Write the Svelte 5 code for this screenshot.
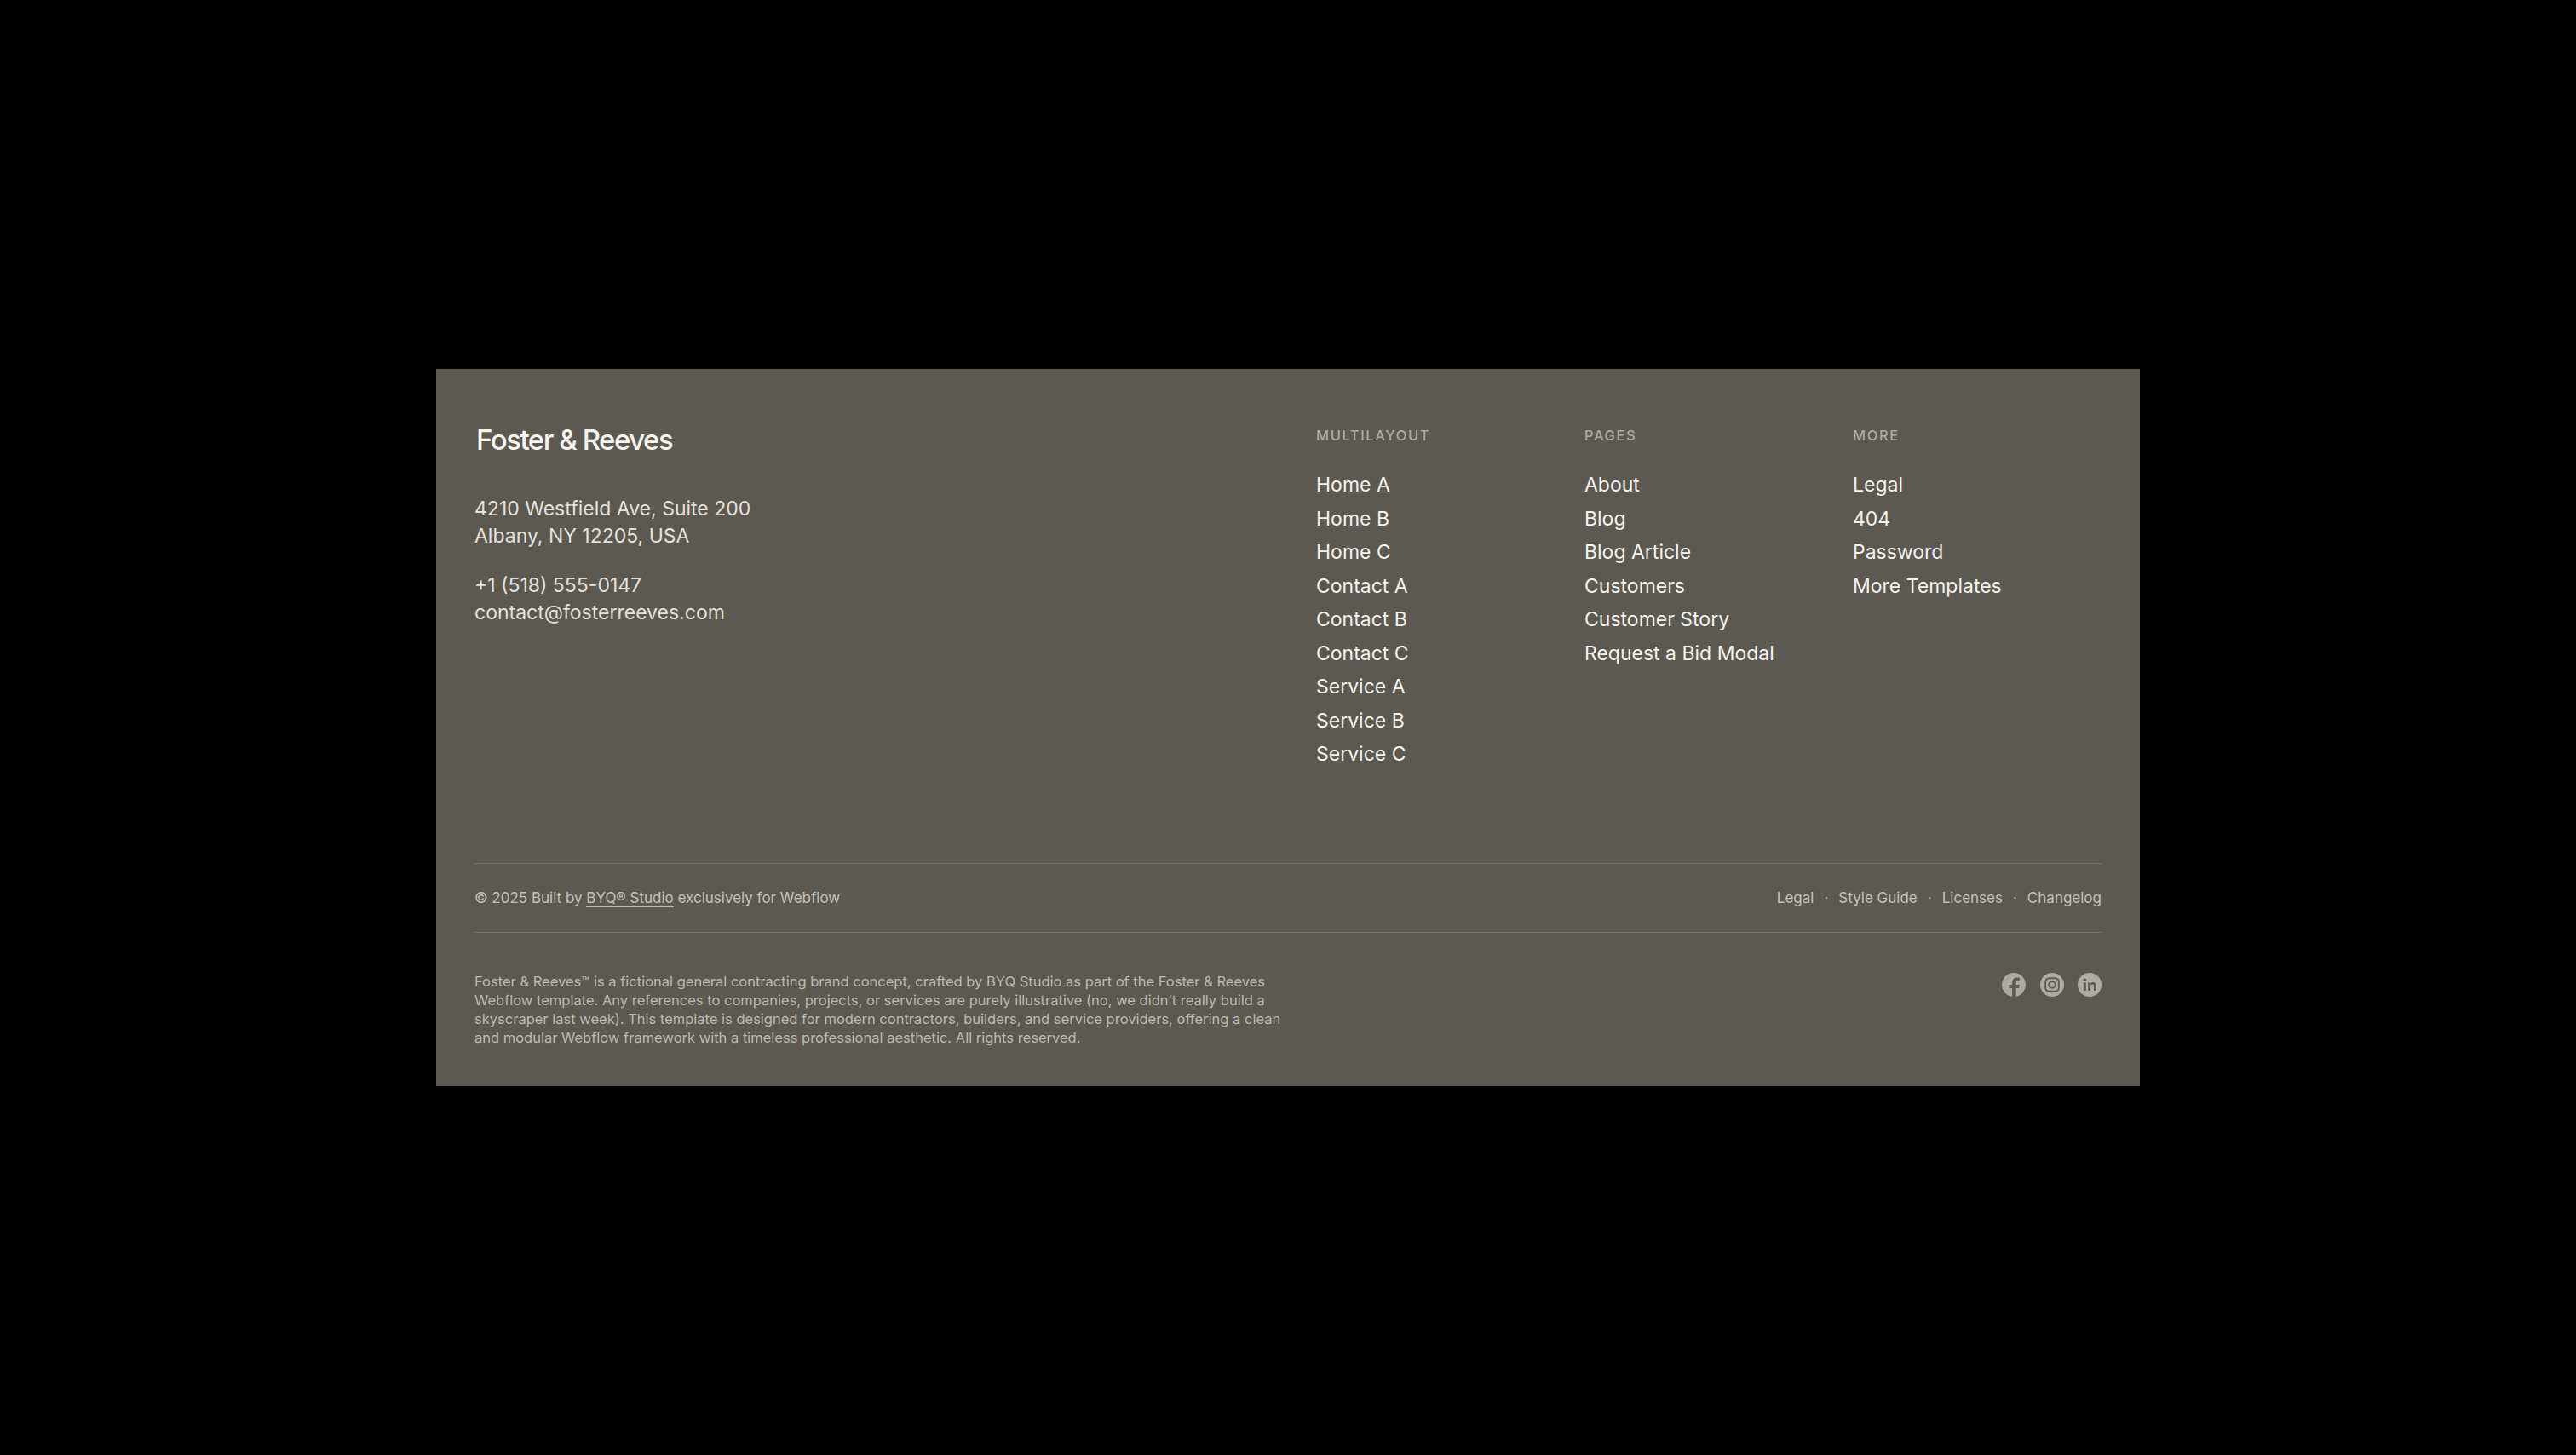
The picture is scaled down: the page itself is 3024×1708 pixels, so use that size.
<script>
  const columns = [
    { title: 'MULTILAYOUT', links: ['Home A', 'Home B', 'Home C', 'Contact A', 'Contact B', 'Contact C', 'Service A', 'Service B', 'Service C'] },
    { title: 'PAGES', links: ['About', 'Blog', 'Blog Article', 'Customers', 'Customer Story', 'Request a Bid Modal'] },
    { title: 'MORE', links: ['Legal', '404', 'Password', 'More Templates'] }
  ];
  const legalLinks = ['Legal', 'Style Guide', 'Licenses', 'Changelog'];
</script>

<footer class="footer">
  <div class="top">
    <div class="brand">
      <div class="logo">Foster &amp; Reeves</div>
      <p class="contact">4210 Westfield Ave, Suite 200<br />Albany, NY 12205, USA</p>
      <p class="contact">+1 (518) 555-0147<br />contact@fosterreeves.com</p>
    </div>
    {#each columns as col}
      <nav class="col">
        <h4>{col.title}</h4>
        <ul>
          {#each col.links as link}
            <li>{link}</li>
          {/each}
        </ul>
      </nav>
    {/each}
  </div>

  <div class="meta">
    <span>© 2025 Built by <span class="underlined">BYQ® Studio</span> exclusively for Webflow</span>
    <div class="meta-links">
      {#each legalLinks as link, i}
        {#if i > 0}<span class="dot">·</span>{/if}
        <span>{link}</span>
      {/each}
    </div>
  </div>

  <div class="bottom">
    <p class="disclaimer">
      Foster &amp; Reeves™ is a fictional general contracting brand concept, crafted by BYQ Studio as part of the Foster &amp; Reeves<br />
      Webflow template. Any references to companies, projects, or services are purely illustrative (no, we didn’t really build a<br />
      skyscraper last week). This template is designed for modern contractors, builders, and service providers, offering a clean<br />
      and modular Webflow framework with a timeless professional aesthetic. All rights reserved.
    </p>
    <div class="socials">
      <svg viewBox="0 0 28 28" aria-label="Facebook">
        <path class="disc" d="M14 0a14 14 0 0 1 2.6 27.75V18h3.5l.7-4h-4.2v-2.4c0-1.3.6-2.3 2.4-2.3h2V5.9c-1-.2-2.1-.3-3.2-.3-3.5 0-5.7 2.1-5.7 5.7V14H8.3v4h3.8v9.87A14 14 0 0 1 14 0z" />
      </svg>
      <svg viewBox="0 0 28 28" aria-label="Instagram">
        <circle class="disc" cx="14" cy="14" r="14" />
        <rect class="cut" x="6.2" y="6.2" width="15.6" height="15.6" rx="4.2" />
        <circle class="cut" cx="14" cy="14" r="3.8" />
        <circle class="cut-fill" cx="18.6" cy="9.4" r="1" />
      </svg>
      <svg viewBox="0 0 28 28" aria-label="LinkedIn">
        <circle class="disc" cx="14" cy="14" r="14" />
        <circle class="cut-fill" cx="8.3" cy="8.2" r="1.8" />
        <rect class="cut-fill" x="6.8" y="11.2" width="3" height="9.8" />
        <path class="cut-fill" d="M12.2 11.2h2.9v1.4c.6-1 1.7-1.6 3-1.6 2.6 0 3.9 1.6 3.9 4.4V21h-3v-5c0-1.500-.6-2.400-1.900-2.400-1.300 0-2 .9-2 2.400v5h-2.900z" />
      </svg>
    </div>
  </div>
</footer>

<style>
  :global(body) {
    background: #000;
    min-height: 1708px;
  }

  .footer {
    box-sizing: border-box;
    width: 2000px;
    height: 842px;
    margin: 433px auto 0;
    transform: translateX(0);
    padding: 63px 45px 0;
    background: #5c5852;
    font-family: Inter, 'Liberation Sans', sans-serif;
    color: #f4f2ec;
  }

  .top {
    display: flex;
    height: 517px;
  }

  .brand {
    flex: 1;
  }

  .logo {
    margin: -3px 0 42px 2px;
    font-size: 33px;
    line-height: 46px;
    font-weight: 500;
    letter-spacing: -1.5px;
    color: #f6f4ef;
  }

  .contact {
    margin: 0 0 26px;
    font-size: 23px;
    line-height: 32px;
    color: #e4e1da;
  }

  .col {
    width: 315px;
  }

  .col:last-child {
    width: 292px;
  }

  h4 {
    margin: 0 0 24px;
    font-size: 16.5px;
    line-height: 30px;
    font-weight: 500;
    letter-spacing: 1.6px;
    color: #aeaba3;
  }

  ul {
    list-style: none;
    margin: 0;
    padding: 0;
  }

  li {
    font-size: 23px;
    line-height: 39.5px;
    color: #f4f2ec;
  }

  .meta {
    display: flex;
    justify-content: space-between;
    align-items: center;
    height: 82px;
    box-sizing: border-box;
    border-top: 1px solid #75716b;
    border-bottom: 1px solid #75716b;
    font-size: 17px;
    color: #c4c1b9;
  }

  .underlined {
    border-bottom: 1px solid #c4c1b9;
  }

  .meta-links {
    display: flex;
    gap: 12px;
  }

  .dot {
    color: #aeaba3;
  }

  .bottom {
    display: flex;
    justify-content: space-between;
    padding-top: 46px;
  }

  .disclaimer {
    margin: 0;
    font-size: 16.5px;
    line-height: 22px;
    color: #bdbab2;
    white-space: nowrap;
  }

  .socials {
    display: flex;
    gap: 16.500px;
    margin-top: 1px;
  }

  svg {
    width: 28px;
    height: 28px;
  }

  .disc {
    fill: #aeaba3;
  }

  .cut {
    fill: none;
    stroke: #5c5852;
    stroke-width: 1.9;
  }

  .cut-fill {
    fill: #5c5852;
  }
</style>
